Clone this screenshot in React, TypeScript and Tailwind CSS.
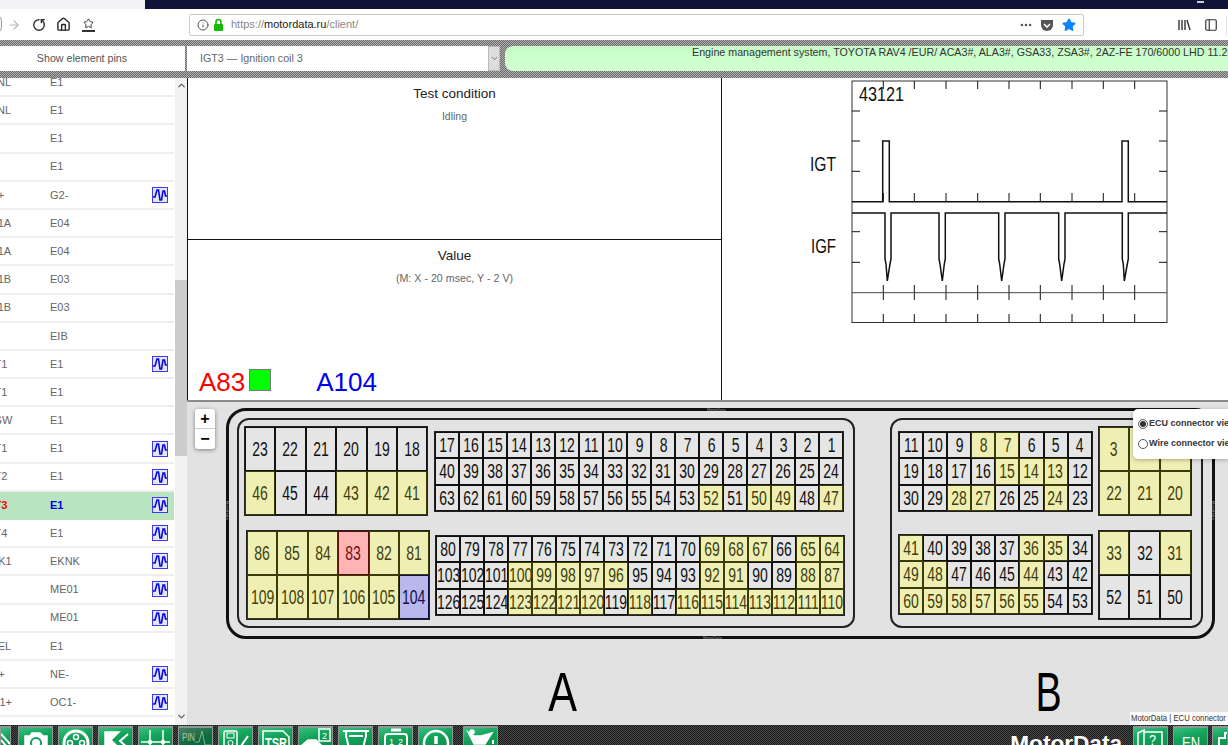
import { ArrowRight, Ellipsis, House, Info, PanelLeft, RotateCw, Star, ChevronDown, ChevronUp } from "lucide-react";
import type { ReactNode } from "react";

type Tone = "g" | "y" | "r" | "b";

const toneClass: Record<Tone, string> = {
  g: "bg-[#e5e5e5] border-[#111111] text-[#111111]",
  y: "bg-[#efefb4] border-[#3c3c0a] text-[#40400c]",
  r: "bg-[#ffb4b4] border-[#5a0a0a] text-[#701020]",
  b: "bg-[#b8b8ec] border-[#10104a] text-[#10104f]",
};

function range(from: number, to: number) {
  const out: number[] = [];
  for (let i = from; i >= to; i--) out.push(i);
  return out;
}

function Block({ nums, yellow, special, className }: { nums: number[]; yellow: number[]; special?: Record<number, Tone>; className: string }) {
  return (
    <div className={`grid outline outline-[#222222] shrink-0 ${className}`}>
      {nums.map((n) => {
        const tone: Tone = special?.[n] ?? (yellow.includes(n) ? "y" : "g");
        return (
          <div key={n} className={`flex items-center justify-center border text-[20px] leading-none ${toneClass[tone]}`}>
            <span className="inline-block scale-x-[.7]">{n}</span>
          </div>
        );
      })}
    </div>
  );
}

function Wave() {
  return (
    <svg width="16" height="16" viewBox="0 0 16 16" className="shrink-0">
      <rect x="0.5" y="0.5" width="15" height="15" fill="#e4e6ff" stroke="#3b3bf5" />
      <path d="M1 10 L3 10 L5 3 L6.5 3 L8 13 L9.5 13 L11 4 L12.5 4 L13.5 9 L15 9" fill="none" stroke="#0808d8" strokeWidth="1.6" />
    </svg>
  );
}

const rows: { a?: string; b: string; wave?: boolean; active?: boolean }[] = [
  { a: "TENL", b: "E1" },
  { a: "TENL", b: "E1" },
  { b: "E1" },
  { b: "E1" },
  { a: "G2+", b: "G2-", wave: true },
  { a: "HT1A", b: "E04" },
  { a: "HT1A", b: "E04" },
  { a: "HT1B", b: "E03" },
  { a: "HT1B", b: "E03" },
  { b: "EIB" },
  { a: "IGT1", b: "E1", wave: true },
  { a: "IGT1", b: "E1" },
  { a: "IGSW", b: "E1" },
  { a: "IGT1", b: "E1", wave: true },
  { a: "IGT2", b: "E1", wave: true },
  { a: "IGT3", b: "E1", wave: true, active: true },
  { a: "IGT4", b: "E1", wave: true },
  { a: "KNK1", b: "EKNK", wave: true },
  { b: "ME01", wave: true },
  { b: "ME01", wave: true },
  { a: "FUEL", b: "E1" },
  { a: "NE+", b: "NE-", wave: true },
  { a: "OC1+", b: "OC1-", wave: true },
];

function PinList() {
  return (
    <div className="w-[187px] shrink-0 flex bg-white overflow-hidden">
      <div className="w-[175px] overflow-hidden">
        <div className="-mt-[9px] pr-px">
          {rows.map((r, i) => (
            <div
              key={i}
              className={`h-[28.2px] flex items-center border-b-2 text-[11px] ${r.active ? "bg-[#b8e4c0] border-[#b8e4c0] font-bold" : "border-[#eeeeee] text-[#666666]"}`}
            >
              <div className={`w-[50px] shrink-0 overflow-hidden ${r.active ? "text-[#ff0000]" : ""}`}>
                <span className="block -ml-[17px] whitespace-nowrap">{r.a}</span>
              </div>
              <div className={`flex-1 ${r.active ? "text-[#0000e6]" : ""}`}>{r.b}</div>
              <div className="w-[16px] mr-[6px]">{r.wave && <Wave />}</div>
            </div>
          ))}
        </div>
      </div>
      <div className="w-[12px] bg-[#f1f1f1] flex flex-col items-center relative">
        <ChevronUp size={11} strokeWidth={2.5} className="text-[#555555] mt-[2px]" />
        <div className="w-full h-[176px] bg-[#cdcdcd] mt-[189px]" />
        <ChevronDown size={11} strokeWidth={2.5} className="text-[#555555] mt-auto mb-[3px]" />
      </div>
    </div>
  );
}

function Chart() {
  const ticksX = [883.3, 914.3, 946, 977.7, 1009, 1040.3, 1072, 1103.3, 1134.7];
  const ticksY = [111, 141, 171.3, 231.7, 262.3];
  const spikes = [
    [885, 887.3, 891],
    [939, 942.3, 945.3],
    [998.7, 1001.7, 1005],
    [1058.7, 1061.7, 1065],
    [1122.3, 1124.3, 1128.3],
  ];
  const igf =
    "M852 213 " +
    spikes.map(([l, t, r]) => `H${l} V259 L${l + 1} 264 L${t} 281 L${r - 1} 264 L${r} 259 V213`).join(" ") +
    " H1167";
  return (
    <svg viewBox="722 78 506 323" className="w-[506px] h-[323px] block" fill="none" stroke="#111111">
      <rect x="852" y="81" width="315" height="241.5" stroke="#333333" />
      {ticksX.map((x) => (
        <g key={x} strokeWidth="1">
          <path d={`M${x} 81 V89`} />
          <path d={`M${x} 193 V202`} />
          <path d={`M${x} 285 V300`} />
          <path d={`M${x} 314 V322`} />
        </g>
      ))}
      {ticksY.map((y) => (
        <path key={y} d={`M852 ${y} H860 M1159 ${y} H1167`} />
      ))}
      <path d="M852 201.7 H882.7 V141 H889.3 V201.7 H1122 V141 H1128.3 V201.7 H1167" strokeWidth="1.5" />
      <path d={igf} strokeWidth="1.5" strokeLinejoin="miter" />
      <path d="M852 292.7 H1167" stroke="#444444" />
      <text x="859" y="101" fontSize="20" fill="#111111" stroke="none" textLength="45" lengthAdjust="spacingAndGlyphs">43121</text>
      <text x="810" y="171" fontSize="20" fill="#111111" stroke="none" textLength="26" lengthAdjust="spacingAndGlyphs">IGT</text>
      <text x="811" y="253" fontSize="20" fill="#111111" stroke="none" textLength="25" lengthAdjust="spacingAndGlyphs">IGF</text>
    </svg>
  );
}

function Btn({ children, className = "ml-[5px]", w = "w-[35px]", dim }: { children?: ReactNode; className?: string; w?: string; dim?: boolean }) {
  return (
    <div
      className={`${w} h-[22px] shrink-0 overflow-hidden border-t-2 border-x border-[#8a9a90] ${className} ${
        dim
          ? "bg-[linear-gradient(160deg,#4a7d62,#0b6b3d_60%)]"
          : "bg-[linear-gradient(165deg,#35c07c_0%,#12a25a_45%,#0a8c49_100%)]"
      }`}
    >
      {children}
    </div>
  );
}

function Glyph({ children }: { children: ReactNode }) {
  return (
    <svg viewBox="0 0 33 20" className="w-[33px] h-[20px] block" fill="none" stroke="#ffffff" strokeWidth="1.5">
      {children}
    </svg>
  );
}

function BottomBar() {
  return (
    <div className="h-[20px] shrink-0 overflow-hidden flex bg-[repeating-conic-gradient(#1b1b1b_0_25%,#4a4a4a_0_50%)] bg-[length:2px_2px] pt-[1px]">
      <Btn w="w-[11px]" className="">
        <svg viewBox="0 0 11 20" className="w-[11px] h-[20px]" stroke="#ffffff" strokeWidth="2">
          <path d="M0 6 L9 16 M0 12 L6 19" />
        </svg>
      </Btn>
      <Btn className="ml-[7px]">
        <Glyph>
          <path d="M6 8 H11 L13 5 H21 L24 8 H28 V20 H6 Z" fill="#ffffff" />
          <circle cx="17" cy="15" r="5" stroke="#12a25a" strokeWidth="2" />
        </Glyph>
      </Btn>
      <Btn>
        <Glyph>
          <circle cx="17" cy="15" r="12" strokeWidth="3" />
          <circle cx="17" cy="9" r="2.5" />
          <circle cx="11" cy="15" r="2.5" />
          <circle cx="23" cy="15" r="2.5" />
        </Glyph>
      </Btn>
      <Btn>
        <Glyph>
          <path d="M6 4 H20 L12 12 L20 20 H6 Z" fill="#ffffff" />
          <path d="M24 6 L16 13 L24 20" stroke="#12a25a" strokeWidth="2" />
          <path d="M29 6 L21 13 L29 20" strokeWidth="2" />
        </Glyph>
      </Btn>
      <Btn>
        <Glyph>
          <path d="M2 14 H31 M11 2 V20 M24 2 V20" />
          <circle cx="11" cy="14" r="1.5" fill="#ffffff" />
          <circle cx="24" cy="14" r="1.5" fill="#ffffff" />
        </Glyph>
      </Btn>
      <Btn dim>
        <Glyph>
          <text x="3" y="13" fontSize="11" fill="#a8c8b4" stroke="none" textLength="13" lengthAdjust="spacingAndGlyphs">PIN</text>
          <path d="M16 14 H20 L23 3 L26 17 H32" stroke="#7fb396" strokeWidth="1" />
        </Glyph>
      </Btn>
      <Btn>
        <Glyph>
          <rect x="5" y="3" width="13" height="17" rx="1.5" />
          <rect x="8" y="5" width="7" height="5" strokeWidth="1" />
          <circle cx="11.5" cy="15" r="2.5" strokeWidth="1" />
          <path d="M22 18 L29 8" strokeWidth="2" />
        </Glyph>
      </Btn>
      <Btn>
        <Glyph>
          <path d="M4 20 V3 H24 L30 9 V20" />
          <text x="6" y="20" fontSize="14" fontWeight="700" fill="#ffffff" stroke="none" textLength="22" lengthAdjust="spacingAndGlyphs">TSR</text>
        </Glyph>
      </Btn>
      <Btn>
        <Glyph>
          <rect x="20" y="1" width="11" height="12" />
          <text x="23" y="11" fontSize="9" fill="#ffffff" stroke="none">2</text>
          <path d="M2 18 L9 12 H17 L23 18 H31 V20 H2 Z" fill="#ffffff" />
        </Glyph>
      </Btn>
      <Btn>
        <Glyph>
          <path d="M4 3 H30 M7 3 V8 L10 20 M27 3 V8 L24 20 M10 8 H24" strokeWidth="2" />
        </Glyph>
      </Btn>
      <Btn>
        <Glyph>
          <path d="M12 2 H22" strokeWidth="3" />
          <rect x="6" y="6" width="22" height="14" rx="3" strokeWidth="2" />
          <text x="10" y="17" fontSize="9" fill="#ffffff" stroke="none">1</text>
          <text x="19" y="17" fontSize="9" fill="#ffffff" stroke="none">2</text>
        </Glyph>
      </Btn>
      <Btn>
        <Glyph>
          <circle cx="17" cy="15" r="12" strokeWidth="2.5" />
          <path d="M17 8 V16" strokeWidth="3.5" />
        </Glyph>
      </Btn>
      <Btn className="ml-[10px]">
        <Glyph>
          <path d="M4 4 L10 8 H17 L28 5 L21 16 H10 Z" fill="#ffffff" />
          <circle cx="8" cy="4" r="2" fill="#ffffff" />
          <path d="M29 12 V16" strokeWidth="2" />
        </Glyph>
      </Btn>
      <div className="ml-auto mr-[6px] text-white font-bold text-[22.6px] leading-none pt-[7px]">MotorData</div>
      <Btn>
        <Glyph>
          <path d="M4 20 V5 L10 2 V20 M10 4 H28 V20" />
          <text x="15" y="17" fontSize="15" fill="#ffffff" stroke="none" textLength="7" lengthAdjust="spacingAndGlyphs">?</text>
        </Glyph>
      </Btn>
      <Btn>
        <Glyph>
          <text x="8" y="21" fontSize="16" fill="#ffffff" stroke="none" textLength="18" lengthAdjust="spacingAndGlyphs">EN</text>
        </Glyph>
      </Btn>
      <Btn w="w-[16px]" className="ml-[4px]">
        <svg viewBox="0 0 16 20" className="w-[16px] h-[20px]" fill="none" stroke="#ffffff" strokeWidth="2">
          <path d="M6 20 V10 H12 V5 L16 5" />
        </svg>
      </Btn>
    </div>
  );
}

export default function App() {
  return (
    <div className="w-[1228px] h-[745px] overflow-hidden flex flex-col bg-white font-['Liberation_Sans',sans-serif]">
      {/* browser chrome */}
      <div className="h-[9px] flex shrink-0">
        <div className="w-[145px] bg-[#f4f4f6]" />
        <div className="flex-1 bg-[#0f1438] flex justify-end">
          <div className="w-[7px] h-[2px] bg-[#cccccc] mt-[1px] mr-[24px]" />
        </div>
      </div>
      <div className="h-[31px] shrink-0 flex items-center relative">
        <div className="absolute -left-[12px] top-[5px] w-[14px] h-[20px] rounded-full border border-[#999999]" />
        <div className="w-[189px] shrink-0 flex items-center pl-[7px] gap-[10px]">
          <ArrowRight size={14} className="text-[#b5b5b5]" />
          <RotateCw size={14} strokeWidth={2.4} className="text-[#333333] -scale-x-100 rotate-90 ml-px" />
          <House size={15} strokeWidth={2.2} className="text-[#222222]" />
          <div className="flex flex-col items-center w-[14px]">
            <Star size={11} strokeWidth={2} className="text-[#333333]" />
            <div className="w-[13px] h-[2px] bg-[#333333] mt-[1px]" />
          </div>
        </div>
        <div className="w-[895px] h-[22px] flex items-center border border-[#cccccc] rounded-[2px] pl-[7px] pr-[4px]">
          <Info size={12} className="text-[#555555]" />
          <svg width="11" height="13" viewBox="0 0 11 13" className="ml-[4px]">
            <path d="M3 6 V4 A2.5 2.5 0 0 1 8 4 V6" fill="none" stroke="#12bc00" strokeWidth="1.6" />
            <rect x="1" y="6" width="9" height="7" rx="1" fill="#12bc00" />
          </svg>
          <div className="ml-[7px] text-[11px] text-[#888888] whitespace-nowrap">
            https://<span className="text-[#222222]">motordata.ru</span>/client/
          </div>
          <Ellipsis size={14} strokeWidth={2.5} className="ml-auto text-[#555555]" />
          <svg width="14" height="14" viewBox="0 0 14 14" className="ml-[7px]">
            <path d="M1 2 H13 V7 A6 6 0 0 1 1 7 Z" fill="#555555" />
            <path d="M4 6 L7 9 L10 6" fill="none" stroke="#ffffff" strokeWidth="1.6" />
          </svg>
          <Star size={14} className="ml-[8px] mr-[3px] text-[#0a84ff] fill-[#0a84ff]" />
        </div>
        <div className="ml-[93px] flex items-center gap-[3px]">
          <svg width="14" height="14" viewBox="0 0 14 14" fill="none" stroke="#333333" strokeWidth="1.4">
            <path d="M2 2 V12 M5 2 V12 M8 2 V12 M10 2 L13 12" />
          </svg>
        </div>
        <PanelLeft size={14} className="ml-[13px] text-[#333333]" />
        <div className="ml-[8px] w-px h-[20px] bg-[#e4e4e4]" />
      </div>

      {/* hatched toolbar */}
      <div className="shrink-0 pt-[6px] pb-[7px] flex bg-[repeating-conic-gradient(#6a6a6a_0_25%,#b0b0b0_0_50%)] bg-[length:2px_2px]">
        <div className="w-[185px] h-[25px] bg-white flex items-center justify-center text-[10.7px] text-[#555555] pr-[21px]">Show element pins</div>
        <div className="w-[313px] h-[25px] ml-[2px] bg-white flex items-center text-[10.7px] text-[#666666] pl-[13px]">
          <span>IGT3 — Ignition coil 3</span>
          <div className="ml-auto w-[12px] h-full bg-[#dddddd] border border-[#bbbbbb] flex items-center justify-center">
            <ChevronDown size={9} className="text-[#555555]" />
          </div>
        </div>
        <div className="flex-1 h-[25px] ml-[5px] rounded-l-[8px] bg-[linear-gradient(#c6fdc6,#d2ffd2)] overflow-hidden whitespace-nowrap text-[10.7px] leading-[13px] text-[#333333] pl-[187px]">
          Engine management system, TOYOTA RAV4 /EUR/ ACA3#, ALA3#, GSA33, ZSA3#, 2AZ-FE 170/6000 LHD 11.2003
        </div>
      </div>

      <div className="flex-1 min-h-0 flex">
        <PinList />
        <div className="flex-1 min-w-0 flex flex-col">
          <div className="h-[324px] shrink-0 flex border-b-2 border-[#8a8a8a]">
            <div className="w-[535px] shrink-0 flex flex-col border-x border-[#111111] bg-white">
              <div className="h-[162px] shrink-0 border-b border-[#111111] text-center pt-[8px]">
                <div className="text-[13.5px] leading-[16px] text-[#222222]">Test condition</div>
                <div className="text-[10.5px] leading-[12px] mt-[8px] text-[#666666]">Idling</div>
              </div>
              <div className="flex-1 flex flex-col text-center pt-[8px]">
                <div className="text-[13.5px] leading-[16px] text-[#222222]">Value</div>
                <div className="text-[10.7px] leading-[12px] mt-[8px] text-[#666666]">(M: X - 20 msec, Y - 2 V)</div>
                <div className="mt-auto pb-[3px] pl-[11px] flex items-center text-[26px] leading-[30px]">
                  <span className="text-[#ff0000]">A83</span>
                  <div className="w-[22px] h-[22px] ml-[4px] -mt-[5px] bg-[#00ff00] border border-[#777777]" />
                  <span className="text-[#0000ee] ml-[45px]">A104</span>
                </div>
              </div>
            </div>
            <div className="flex-1 overflow-hidden bg-white">
              <Chart />
            </div>
          </div>

          {/* connector map */}
          <div className="flex-1 min-h-0 relative bg-[#e2e2e2] pt-[6px] pl-[39px]">
            <div className="w-[989px] h-[231px] border-[3px] border-[#111111] rounded-[20px] flex pl-[8px] pt-[7px] relative">
              <div className="w-[618px] h-[210px] border-2 border-[#222222] rounded-[12px] pl-[6px] pt-[7px] shrink-0">
                <div className="flex items-start">
                  <Block className="grid-cols-[repeat(6,30.4px)] grid-rows-[repeat(2,44px)]" nums={[23, 22, 21, 20, 19, 18, 46, 45, 44, 43, 42, 41]} yellow={[46, 43, 42, 41]} />
                  <Block className="grid-cols-[repeat(17,24px)] grid-rows-[repeat(3,26.3px)] ml-[8px] mt-[5px]" nums={range(17, 1).concat(range(40, 24), range(63, 47))} yellow={[52, 50, 49, 47]} />
                </div>
                <div className="flex items-start mt-[16px] pl-[2px]">
                  <Block
                    className="grid-cols-[repeat(6,30.4px)] grid-rows-[repeat(2,44px)]"
                    nums={[86, 85, 84, 83, 82, 81, 109, 108, 107, 106, 105, 104]}
                    yellow={[86, 85, 84, 82, 81, 109, 108, 107, 106, 105]}
                    special={{ 83: "r", 104: "b" }}
                  />
                  <Block
                    className="grid-cols-[repeat(17,24px)] grid-rows-[repeat(3,26.3px)] ml-[7px] mt-[5px]"
                    nums={range(80, 64).concat(range(103, 87), range(126, 110))}
                    yellow={[69, 68, 67, 65, 64, 100, 99, 98, 97, 96, 92, 91, 88, 87, 123, 122, 121, 120, 118, 116, 115, 114, 113, 112, 111, 110]}
                  />
                </div>
              </div>
              <div className="w-[313px] h-[210px] ml-[35px] border-2 border-[#222222] rounded-[12px] pl-[7px] pt-[7px] shrink-0">
                <div className="flex items-start">
                  <Block className="grid-cols-[repeat(8,24.1px)] grid-rows-[repeat(3,26.3px)] mt-[5px]" nums={range(11, 4).concat(range(19, 12), range(30, 23))} yellow={[8, 7, 15, 14, 13, 28, 27, 24]} />
                  <Block className="grid-cols-[repeat(3,30.6px)] grid-rows-[repeat(2,44px)] ml-[7px]" nums={[3, 2, 1, 22, 21, 20]} yellow={[3, 2, 1, 22, 21, 20]} />
                </div>
                <div className="flex items-start mt-[16px]">
                  <Block className="grid-cols-[repeat(8,24.1px)] grid-rows-[repeat(3,26.3px)] mt-[4px]" nums={range(41, 34).concat(range(49, 42), range(60, 53))} yellow={[41, 36, 35, 49, 48, 44, 60, 59, 58, 57, 56, 55]} />
                  <Block className="grid-cols-[repeat(3,30.6px)] grid-rows-[repeat(2,44px)] ml-[7px]" nums={[33, 32, 31, 52, 51, 50]} yellow={[33, 31]} />
                </div>
              </div>
              <span className="absolute -top-[3px] left-[478px] text-[4px] leading-[3px] text-[#999999]">MotorData</span>
              <span className="absolute -bottom-[3px] left-[474px] text-[4px] leading-[3px] text-[#999999]">MotorData</span>
              <span className="absolute top-[90px] -left-[3px] text-[4px] leading-[3px] text-[#999999] [writing-mode:vertical-rl]">MotorData</span>
              <span className="absolute top-[90px] -right-[3px] text-[4px] leading-[3px] text-[#999999] [writing-mode:vertical-rl]">MotorData</span>
            </div>

            <div className="flex mt-[25px] text-[56px] leading-none text-black">
              <span className="ml-[318px] scale-x-[.77]">A</span>
              <span className="ml-[449px] scale-x-[.7]">B</span>
            </div>

            {/* overlays */}
            <div className="absolute left-[8px] top-[7px] w-[20px] h-[40px] bg-white rounded-[3px] shadow-[0_1px_4px_rgba(0,0,0,0.45)] flex flex-col items-center text-black font-bold text-[16px] leading-[19px]">
              <span className="h-[20px] w-full text-center border-b border-[#cccccc]">+</span>
              <span className="h-[20px]">−</span>
            </div>
            <div className="absolute right-0 top-[7px] w-[95px] h-[50px] bg-white rounded-l-[5px] shadow-[0_1px_4px_rgba(0,0,0,0.3)] overflow-hidden text-[9px] text-[#333333] font-semibold whitespace-nowrap pl-[5px] pt-[8px]">
              <div className="flex items-center h-[14px]">
                <div className="w-[10px] h-[10px] rounded-full border border-[#555555] flex items-center justify-center shrink-0">
                  <div className="w-[6px] h-[6px] rounded-full bg-[#333333]" />
                </div>
                <span className="ml-[1px]">ECU connector view</span>
              </div>
              <div className="flex items-center h-[14px] mt-[6px]">
                <div className="w-[10px] h-[10px] rounded-full border border-[#555555] shrink-0" />
                <span className="ml-[1px]">Wire connector view</span>
              </div>
            </div>
            <div className="absolute right-0 bottom-0 w-[98px] h-[13px] bg-white/85 overflow-hidden whitespace-nowrap text-[9px] leading-[13px] text-[#333333] pl-[1px]">
              <span className="inline-block origin-left scale-x-[.86]">MotorData | ECU connector view</span>
            </div>
          </div>
        </div>
      </div>

      <BottomBar />
    </div>
  );
}
